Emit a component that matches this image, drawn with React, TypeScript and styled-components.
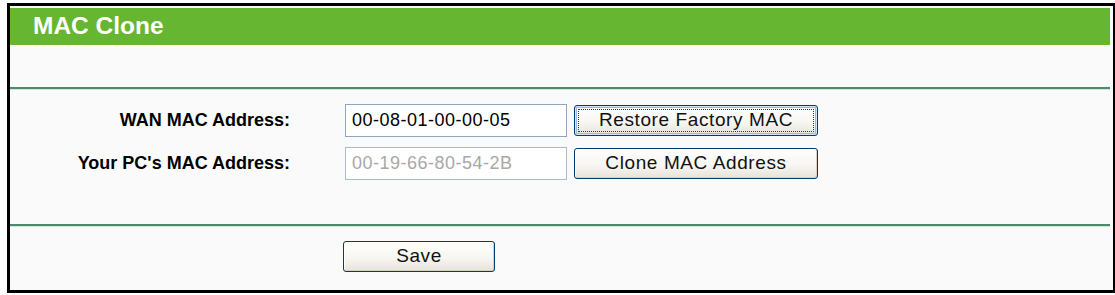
import React from 'react'
import styled, { createGlobalStyle, css } from 'styled-components'

const GlobalStyle = createGlobalStyle`
  html, body {
    margin: 0;
    padding: 0;
    background: #ffffff;
  }
  body {
    font-family: "Liberation Sans", Arial, sans-serif;
  }
`

const Page = styled.div`
  padding: 3px 2px 0 7px;
`

const Frame = styled.div`
  width: 1100px;
  height: 282px;
  border: 3px solid #000;
  background: #fafafa;
  padding: 2px 3px 0 0;
  box-sizing: content-box;
  display: flex;
  flex-direction: column;
`

const Header = styled.div`
  height: 37px;
  background: #66b632;
  color: #fff;
  font-size: 24.5px;
  font-weight: bold;
  padding-left: 23px;
  display: flex;
  align-items: center;
  padding-bottom: 1px;
  box-sizing: border-box;
`

const Spacer = styled.div`
  height: 42px;
`

const Separator = styled.div`
  height: 2px;
  background: #4e8a6a;
  box-shadow: 0 1px 0 #cfe8da;
`

const Form = styled.div`
  display: flex;
  flex-direction: column;
  gap: 10px;
  padding: 15px 0 0;
  height: 135px;
  box-sizing: border-box;
`

const Row = styled.div`
  display: grid;
  grid-template-columns: 328px 222px 244px;
  column-gap: 7px;
  align-items: center;
`

const Label = styled.label`
  font-size: 18px;
  font-weight: bold;
  color: #000;
  text-align: right;
  padding-right: 48px;
  white-space: nowrap;
`

const MacInput = styled.input`
  width: 222px;
  height: 33px;
  box-sizing: border-box;
  border: 1px solid #8ea6bf;
  background: #fff;
  padding: 0 6px;
  font-family: "Liberation Sans", Arial, sans-serif;
  font-size: 18px;
  letter-spacing: 0.5px;
  color: #000;
  outline: none;

  &:disabled {
    background: #fff;
    color: #a8a8a8;
    border-color: #a9bacb;
  }
`

const XpButton = styled.button<{ $width: number; $focused?: boolean }>`
  position: relative;
  width: ${(p) => p.$width}px;
  height: 31px;
  box-sizing: border-box;
  border: 1px solid #003c74;
  border-radius: 3px;
  background: linear-gradient(#ffffff 0%, #f7f6f2 55%, #e6e3d8 100%);
  font-family: "Liberation Sans", Arial, sans-serif;
  font-size: 19px;
  letter-spacing: 0.6px;
  color: #111;
  padding: 0 0 1px;
  cursor: pointer;
  box-shadow: inset -1px -1px 0 #d6d0c5, inset 1px 1px 0 #fff;

  ${(p) =>
    p.$focused &&
    css`
      box-shadow: inset 0 0 0 1px #cee7ff, inset 0 0 0 2px #98b8ea;
      &::after {
        content: '';
        position: absolute;
        inset: 3px;
        border: 1px dotted #333;
        pointer-events: none;
      }
    `}
`

const SaveArea = styled.div`
  padding: 15px 0 0 333px;
`

export default function App() {
  return (
    <>
      <GlobalStyle />
      <Page>
        <Frame>
          <Header>MAC Clone</Header>
          <Spacer />
          <Separator />
          <Form>
            <Row>
              <Label>WAN MAC Address:</Label>
              <MacInput defaultValue="00-08-01-00-00-05" />
              <XpButton $width={244} $focused>
                Restore Factory MAC
              </XpButton>
            </Row>
            <Row>
              <Label>Your PC's MAC Address:</Label>
              <MacInput defaultValue="00-19-66-80-54-2B" disabled />
              <XpButton $width={244}>Clone MAC Address</XpButton>
            </Row>
          </Form>
          <Separator />
          <SaveArea>
            <XpButton $width={152}>Save</XpButton>
          </SaveArea>
        </Frame>
      </Page>
    </>
  )
}
